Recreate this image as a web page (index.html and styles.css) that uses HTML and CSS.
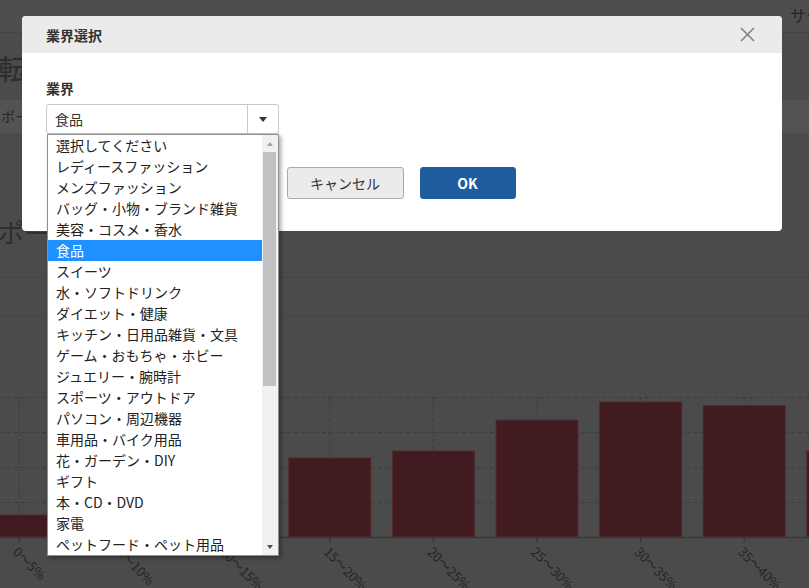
FILE: index.html
```html
<!DOCTYPE html>
<html lang="ja">
<head>
<meta charset="utf-8">
<title>業界選択</title>
<link rel="stylesheet" href="styles.css">
</head>
<body>
<div class="page">
  <header class="topbar">サービス</header>
  <h1 class="page-title">転換率レポート</h1>
  <div class="tabbar">ポート</div>
  <h2 class="section-title">ポート</h2>
  <div class="row"></div>
  <div class="chart">
    <svg width="809" height="272" viewBox="0 316 809 272" xmlns="http://www.w3.org/2000/svg">
      <g stroke="#3c3c3c" stroke-width="1" stroke-dasharray="4 3">
        <line x1="0" y1="397.5" x2="809" y2="397.5"/>
        <line x1="0" y1="432.5" x2="809" y2="432.5"/>
        <line x1="0" y1="467.5" x2="809" y2="467.5"/>
        <line x1="0" y1="502.5" x2="809" y2="502.5"/>
        <line x1="19" y1="397" x2="19" y2="537"/>
        <line x1="122.6" y1="397" x2="122.6" y2="537"/>
        <line x1="226.2" y1="397" x2="226.2" y2="537"/>
        <line x1="329.8" y1="397" x2="329.8" y2="537"/>
        <line x1="433.4" y1="397" x2="433.4" y2="537"/>
        <line x1="537" y1="397" x2="537" y2="537"/>
        <line x1="640.6" y1="397" x2="640.6" y2="537"/>
        <line x1="744.2" y1="397" x2="744.2" y2="537"/>
      </g>
      <g fill="#421b20" stroke="#532a2e" stroke-width="1">
        <rect x="-22" y="515" width="82" height="22"/>
        <rect x="81.6" y="490" width="82" height="47"/>
        <rect x="185.2" y="470" width="82" height="67"/>
        <rect x="288.8" y="458" width="82" height="79"/>
        <rect x="392.4" y="451" width="82" height="86"/>
        <rect x="496" y="420" width="82" height="117"/>
        <rect x="599.6" y="402" width="82" height="135"/>
        <rect x="703.2" y="405.5" width="82" height="131.5"/>
        <rect x="806.8" y="451" width="82" height="86"/>
      </g>
      <line x1="0" y1="537.5" x2="809" y2="537.5" stroke="#383838" stroke-width="1.5"/>
      <g stroke="#333" stroke-width="1">
        <line x1="19" y1="537" x2="19" y2="543"/>
        <line x1="122.6" y1="537" x2="122.6" y2="543"/>
        <line x1="226.2" y1="537" x2="226.2" y2="543"/>
        <line x1="329.8" y1="537" x2="329.8" y2="543"/>
        <line x1="433.4" y1="537" x2="433.4" y2="543"/>
        <line x1="537" y1="537" x2="537" y2="543"/>
        <line x1="640.6" y1="537" x2="640.6" y2="543"/>
        <line x1="744.2" y1="537" x2="744.2" y2="543"/>
      </g>
      <g class="axis-labels" font-size="13" fill="#262626">
        <text x="12" y="553" transform="rotate(45 12 553)">0～5%</text>
        <text x="115.6" y="553" transform="rotate(45 115.6 553)">5～10%</text>
        <text x="219.2" y="553" transform="rotate(45 219.2 553)">10～15%</text>
        <text x="322.8" y="553" transform="rotate(45 322.8 553)">15～20%</text>
        <text x="426.4" y="553" transform="rotate(45 426.4 553)">20～25%</text>
        <text x="530" y="553" transform="rotate(45 530 553)">25～30%</text>
        <text x="633.6" y="553" transform="rotate(45 633.6 553)">30～35%</text>
        <text x="737.2" y="553" transform="rotate(45 737.2 553)">35～40%</text>
      </g>
    </svg>
  </div>
</div>

<div class="modal">
  <div class="modal-header">
    <span class="modal-title">業界選択</span>
    <svg class="close" width="15" height="15" viewBox="0 0 15 15" xmlns="http://www.w3.org/2000/svg">
      <path d="M1 1 L14 14 M14 1 L1 14" stroke="#858585" stroke-width="1.7" fill="none"/>
    </svg>
  </div>
  <div class="modal-body">
    <div class="field-label">業界</div>
    <div class="select">
      <span class="select-value">食品</span>
      <span class="select-arrow"></span>
      <div class="dropdown">
        <ul class="options">
          <li>選択してください</li>
          <li>レディースファッション</li>
          <li>メンズファッション</li>
          <li>バッグ・小物・ブランド雑貨</li>
          <li>美容・コスメ・香水</li>
          <li class="selected">食品</li>
          <li>スイーツ</li>
          <li>水・ソフトドリンク</li>
          <li>ダイエット・健康</li>
          <li>キッチン・日用品雑貨・文具</li>
          <li>ゲーム・おもちゃ・ホビー</li>
          <li>ジュエリー・腕時計</li>
          <li>スポーツ・アウトドア</li>
          <li>パソコン・周辺機器</li>
          <li>車用品・バイク用品</li>
          <li>花・ガーデン・DIY</li>
          <li>ギフト</li>
          <li>本・CD・DVD</li>
          <li>家電</li>
          <li>ペットフード・ペット用品</li>
        </ul>
        <div class="scrollbar">
          <div class="sb-btn sb-up"></div>
          <div class="sb-track"><div class="sb-thumb"></div></div>
          <div class="sb-btn sb-down"></div>
        </div>
      </div>
    </div>
    <div class="actions">
      <button class="btn btn-cancel">キャンセル</button>
      <button class="btn btn-ok">OK</button>
    </div>
  </div>
</div>
</body>
</html>
```

FILE: styles.css
```css
* {
  box-sizing: border-box;
}

html,
body {
  margin: 0;
  padding: 0;
}

body {
  width: 809px;
  height: 588px;
  overflow: hidden;
  position: relative;
  background: #4b4b4b;
  font-family: "Noto Sans CJK JP", "Noto Sans", sans-serif;
}

.page {
  width: 809px;
  height: 588px;
  overflow: hidden;
}

.topbar {
  height: 33px;
  background: #4e4e4e;
  border-bottom: 1px solid #444;
  padding-left: 790px;
  font-size: 16px;
  line-height: 30px;
  color: #262626;
  white-space: nowrap;
}

.page-title {
  margin: 0 0 0 -2px;
  padding: 15px 0 12px;
  height: 67px;
  font-size: 28px;
  font-weight: 400;
  line-height: 40px;
  color: #2c2c2c;
  white-space: nowrap;
}

.tabbar {
  height: 33px;
  background: #535353;
  padding-left: 1px;
  font-size: 14px;
  line-height: 33px;
  color: #262626;
  white-space: nowrap;
}

.section-title {
  margin: 79px 0 0 -2px;
  height: 65px;
  font-size: 26px;
  font-weight: 400;
  line-height: 40px;
  color: #2e2e2e;
  white-space: nowrap;
}

.row {
  height: 39px;
  border-top: 1px solid #454545;
  border-bottom: 1px solid #454545;
}

.chart svg {
  display: block;
  font-family: "Noto Sans CJK JP", "Noto Sans", sans-serif;
}

/* modal */
.modal {
  position: absolute;
  left: 22px;
  top: 16px;
  width: 760px;
  background: #fff;
  border-radius: 4px;
}

.modal-header {
  height: 37px;
  background: #ebebeb;
  border-radius: 4px 4px 0 0;
  display: flex;
  align-items: center;
  justify-content: space-between;
  padding: 0 27px 0 24px;
}

.modal-title {
  font-size: 14px;
  font-weight: 700;
  color: #333;
}

.close {
  display: block;
}

.modal-body {
  padding: 25px 26px 32px 24px;
}

.field-label {
  font-size: 14px;
  font-weight: 700;
  line-height: 20px;
  color: #333;
  margin-bottom: 6px;
}

.select {
  position: relative;
  width: 233px;
  height: 30px;
  border: 1px solid #c8c8c8;
  border-radius: 3px;
  display: flex;
  background: #fff;
}

.select-value {
  flex: 1;
  padding-left: 8px;
  font-size: 14px;
  line-height: 28px;
  color: #333;
}

.select-arrow {
  width: 31px;
  border-left: 1px solid #c8c8c8;
  display: flex;
  align-items: center;
  justify-content: center;
}

.select-arrow::after {
  content: "";
  border-left: 4px solid transparent;
  border-right: 4px solid transparent;
  border-top: 5px solid #333;
}

.dropdown {
  position: absolute;
  top: 29px;
  left: 0;
  width: 232px;
  height: 422px;
  border: 1px solid #8f8f8f;
  background: #fff;
  display: flex;
  z-index: 5;
  box-shadow: 2px 2px 4px rgba(0, 0, 0, 0.35);
}

.options {
  list-style: none;
  margin: 0;
  padding: 0;
  width: 214px;
}

.options li {
  height: 21px;
  line-height: 21px;
  padding-left: 8px;
  font-size: 14px;
  color: #222;
  white-space: nowrap;
}

.options li.selected {
  background: #1e90ff;
  color: #fff;
}

.scrollbar {
  width: 16px;
  background: #f1f1f1;
  display: flex;
  flex-direction: column;
}

.sb-btn {
  height: 17px;
  display: flex;
  align-items: center;
  justify-content: center;
}

.sb-up::after {
  content: "";
  border-left: 3.5px solid transparent;
  border-right: 3.5px solid transparent;
  border-bottom: 4px solid #a3a3a3;
}

.sb-down::after {
  content: "";
  border-left: 3.5px solid transparent;
  border-right: 3.5px solid transparent;
  border-top: 4px solid #505050;
}

.sb-track {
  flex: 1;
  padding: 0 2px 0 1px;
}

.sb-thumb {
  height: 234px;
  background: #c1c1c1;
}

.actions {
  display: flex;
  justify-content: center;
  gap: 16px;
  margin-top: 33px;
}

.btn {
  height: 32px;
  border-radius: 3px;
  font-family: inherit;
  font-size: 14px;
  padding: 0;
  cursor: pointer;
}

.btn-cancel {
  width: 117px;
  background: #ebebeb;
  border: 1px solid #aaa;
  color: #333;
}

.btn-ok {
  width: 96px;
  background: #1e5c9e;
  border: 1px solid #1e5c9e;
  color: #fff;
  font-weight: 700;
}
```
